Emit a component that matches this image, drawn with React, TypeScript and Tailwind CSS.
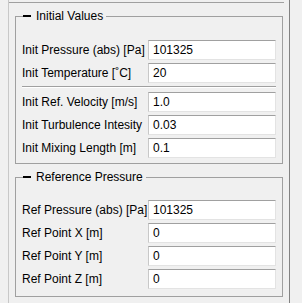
import React from "react";

type Row = { label: string; value: string };

const group1a: Row[] = [
  { label: "Init Pressure (abs) [Pa]", value: "101325" },
  { label: "Init Temperature [\u02daC]", value: "20" },
];
const group1b: Row[] = [
  { label: "Init Ref. Velocity [m/s]", value: "1.0" },
  { label: "Init Turbulence Intesity", value: "0.03" },
  { label: "Init Mixing Length [m]", value: "0.1" },
];
const group2: Row[] = [
  { label: "Ref Pressure (abs) [Pa]", value: "101325" },
  { label: "Ref Point X [m]", value: "0" },
  { label: "Ref Point Y [m]", value: "0" },
  { label: "Ref Point Z [m]", value: "0" },
];

function Field({ row, first }: { row: Row; first?: boolean }) {
  return (
    <div className={`flex items-center h-[20px] ${first ? "" : "mt-[3px]"}`}>
      <div className="w-[126px] whitespace-nowrap leading-none">{row.label}</div>
      <div className="w-[128px] h-[20px] bg-white border border-t-[#a0a0a0] border-l-[#c8c8c8] border-r-[#e3e3e3] border-b-[#e3e3e3] flex items-center pl-[4px] leading-none">
        {row.value}
      </div>
    </div>
  );
}

function GroupHeader({ title }: { title: string }) {
  return (
    <div className="flex h-[14px] items-stretch">
      <div className="w-[8px] flex flex-col">
        <div className="h-[7px]" />
        <div className="flex-1 border-l border-t border-[#a0a0a0]" />
      </div>
      <div className="flex items-center">
        <div className="w-[8px] h-[2px] bg-black" />
      </div>
      <div className="ml-[5px] flex items-center whitespace-nowrap leading-none">{title}</div>
      <div className="flex-1 ml-[3px] flex flex-col">
        <div className="h-[7px]" />
        <div className="flex-1 border-t border-r border-[#a0a0a0]" />
      </div>
    </div>
  );
}

function GroupBody({ children, pt, pb }: { children: React.ReactNode; pt: string; pb: string }) {
  return (
    <div className={`border-l border-r border-b border-[#a0a0a0] pl-[6px] pr-[6px] ${pt} ${pb}`}>
      {children}
    </div>
  );
}

export default function App() {
  return (
    <div className="w-[302px] h-[303px] bg-[#f0f0f0] flex overflow-hidden text-[12px] text-black font-['Liberation_Sans',Arial,sans-serif]">
      <div className="ml-[8px] w-[282px] h-full border-l border-r border-l-[#c8c8c8] border-r-[#828282] flex flex-col">
        <div className="mt-[2px] w-[275px] border-t border-[#a0a0a0]" />
        <div className="ml-[6px] w-[268px] mt-[6px]">
          <GroupHeader title="Initial Values" />
          <GroupBody pt="pt-[17px]" pb="pb-[5px]">
            {group1a.map((r, i) => (
              <Field key={r.label} row={r} first={i === 0} />
            ))}
            <div className="mt-[3px] border-t border-b border-t-[#a0a0a0] border-b-white" />
            <div className="mt-[4px]">
              {group1b.map((r, i) => (
                <Field key={r.label} row={r} first={i === 0} />
              ))}
            </div>
          </GroupBody>
        </div>
        <div className="ml-[6px] w-[268px] mt-[6px]">
          <GroupHeader title="Reference Pressure" />
          <GroupBody pt="pt-[16px]" pb="pb-[7px]">
            {group2.map((r, i) => (
              <Field key={r.label} row={r} first={i === 0} />
            ))}
          </GroupBody>
        </div>
      </div>
    </div>
  );
}
